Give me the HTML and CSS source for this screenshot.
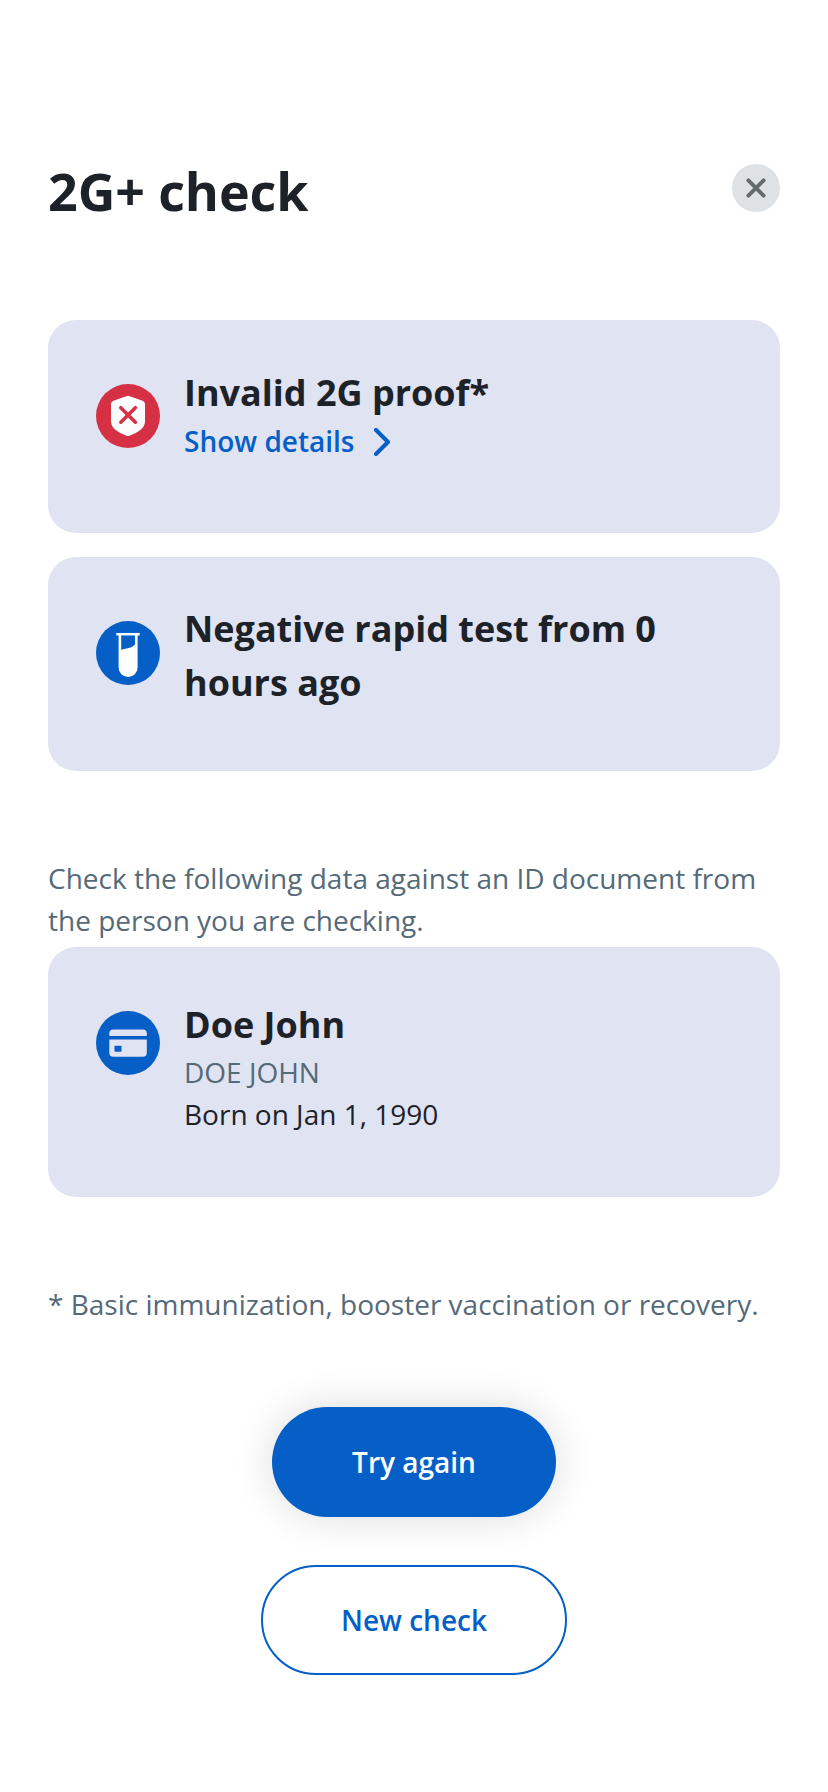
FILE: index.html
```html
<!DOCTYPE html>
<html lang="en">
<head>
<meta charset="utf-8">
<title>2G+ check</title>
<link rel="stylesheet" href="styles.css">
</head>
<body>
<main class="page">
  <header class="header">
    <h1 class="title">2G+ check</h1>
    <button class="close" aria-label="Close">
      <svg width="48" height="48" viewBox="0 0 48 48"><path d="M16.400 16.400 31.600 31.600M31.600 16.400 16.400 31.600" stroke="#636b6b" stroke-width="3.900" stroke-linecap="round"/></svg>
    </button>
  </header>

  <section class="card card-invalid">
    <svg class="icon" viewBox="0 0 64 64"><circle cx="32" cy="32" r="32" fill="#d63044"/><path d="M32 11.700Q33 11.900 36 13L46.500 16.800Q49 17.700 49 20V37C49 41 47.500 43.500 44 46.200Q39.500 49.700 33.500 51.800Q32 52.400 30.500 51.800Q24.500 49.700 20 46.200C16.500 43.500 15 41 15 37V20Q15 17.700 17.500 16.800L28 13Q31 11.900 32 11.700Z" fill="#fff"/><path d="M24.800 23.700 39.400 38.200M39.400 23.700 24.800 38.200" stroke="#d63044" stroke-width="3.500" stroke-linecap="round"/></svg>
    <div class="card-text">
      <h2 class="card-title">Invalid 2G proof*</h2>
      <a class="details">Show details
        <svg class="chevron" width="18" height="28" viewBox="0 0 18 28"><path d="M2 2 14 14 2 26" fill="none" stroke="#055fc6" stroke-width="4" stroke-linecap="round" stroke-linejoin="round"/></svg>
      </a>
    </div>
  </section>

  <section class="card card-test">
    <svg class="icon" viewBox="0 0 64 64"><circle cx="32" cy="32" r="32" fill="#055fc6"/><path d="M20.300 13.200H43.700" stroke="#fff" stroke-width="2.500"/><path d="M23.900 13V46.500a8.200 8.200 0 0 0 16.400 0V13" fill="none" stroke="#fff" stroke-width="2.600"/><path d="M24 29.500C30 26.300 35.500 28.500 40.300 22V46.500a8.200 8.200 0 0 1-16.400 0Z" fill="#fff"/></svg>
    <div class="card-text">
      <h2 class="card-title">Negative rapid test from 0 hours ago</h2>
    </div>
  </section>

  <p class="hint">Check the following data against an ID document from the person you are checking.</p>

  <section class="card card-person">
    <svg class="icon" viewBox="0 0 64 64"><circle cx="32" cy="32" r="32" fill="#055fc6"/><rect x="13.300" y="18.500" width="37.500" height="27.300" rx="4" fill="#e0e3f2"/><path d="M13 26.700H51" stroke="#055fc6" stroke-width="3.400"/><rect x="18.500" y="34.800" width="7" height="6" rx=".8" fill="#055fc6"/></svg>
    <div class="card-text">
      <h2 class="card-title">Doe John</h2>
      <p class="line muted">DOE JOHN</p>
      <p class="line">Born on Jan 1, 1990</p>
    </div>
  </section>

  <p class="footnote">* Basic immunization, booster vaccination or recovery.</p>

  <div class="actions">
    <button class="button primary">Try again</button>
    <button class="button secondary">New check</button>
  </div>
</main>
</body>
</html>
```
FILE: styles.css
```css
* {
  box-sizing: border-box;
}

body {
  margin: 0;
  background: #fff;
  color: #1d2229;
  font: 28px/42px "Open Sans", "Noto Sans", sans-serif;
}

h1, h2, p {
  margin: 0;
}

button {
  font: inherit;
  border: 0;
  padding: 0;
}

.page {
  padding: 152px 48px 0;
  height: 1792px;
  overflow: hidden;
}

.header {
  display: flex;
  justify-content: space-between;
  align-items: flex-start;
  height: 168px;
}

.title {
  font-size: 52px;
  line-height: 78px;
  font-weight: 700;
  letter-spacing: -0.1px;
}

.close {
  width: 48px;
  height: 48px;
  margin-top: 12px;
  border-radius: 50%;
  background: #dee2e5;
}

.close svg {
  display: block;
}

.card {
  display: flex;
  gap: 24px;
  padding: 0 48px;
  border-radius: 28px;
  background: #e0e3f2;
}

.card-invalid {
  height: 213px;
}

.card-test {
  height: 214px;
  margin-top: 24px;
}

.card-person {
  height: 250px;
  margin-top: 6px;
}

.icon {
  flex: none;
  width: 64px;
  height: 64px;
  margin-top: 64px;
}

.card-text {
  padding-top: 46px;
}

.card-test .card-text {
  padding-top: 45px;
}

.card-person .card-text {
  padding-top: 51px;
}

.card-title {
  font-size: 36px;
  line-height: 54px;
  font-weight: 700;
}

.card-person .card-title {
  margin-bottom: -1px;
}

.details {
  display: flex;
  align-items: center;
  gap: 19px;
  color: #055fc6;
  font-weight: 600;
}

.chevron {
  margin-top: 2px;
}

.muted,
.hint,
.footnote {
  color: #556a79;
}

.hint {
  margin-top: 86px;
}

.footnote {
  margin-top: 86px;
}

.actions {
  display: flex;
  flex-direction: column;
  align-items: center;
  gap: 48px;
  margin-top: 82px;
}

.button {
  height: 110px;
  padding: 0 80px;
  border-radius: 55px;
  font-weight: 600;
}

.primary {
  background: #055fc6;
  color: #fff;
  box-shadow: 0 0 40px rgba(0, 0, 0, 0.14);
}

.secondary {
  padding: 0 78px;
  border: 2px solid #055fc6;
  background: #fff;
  color: #055fc6;
}
```
